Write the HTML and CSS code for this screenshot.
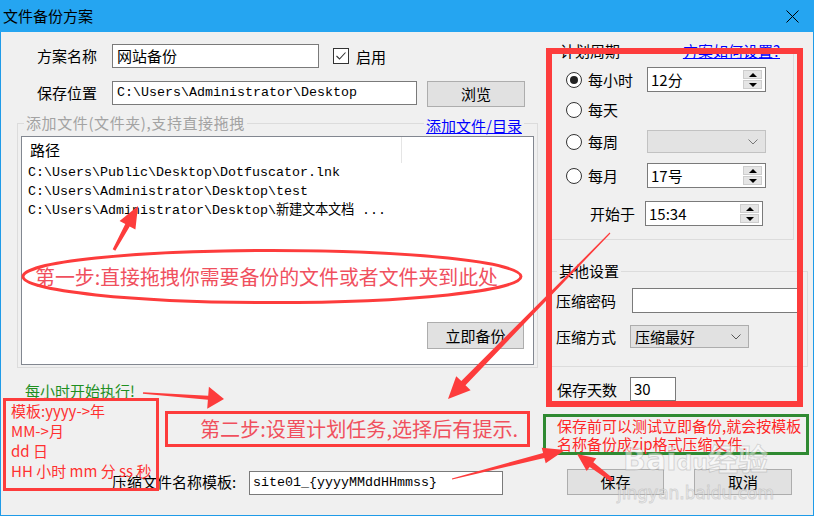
FILE: index.html
```html
<!DOCTYPE html>
<html lang="zh-CN">
<head>
  <meta charset="UTF-8">
  <meta name="viewport" content="width=device-width, initial-scale=1.0">
  <title>文件备份方案</title>
  <link rel="stylesheet" href="styles.css">
</head>
<body>
<div class="window">
  <div class="titlebar">
    <span class="title">文件备份方案</span>
    <svg class="close" width="13" height="13" viewBox="0 0 13 13"><path d="M0.5 0.5L12.5 12.5M12.5 0.5L0.5 12.5" stroke="#000" stroke-width="1" fill="none"/></svg>
  </div>

  <div class="main">
    <div class="left">
      <div class="row row-name">
        <span class="lbl">方案名称</span>
        <div class="field name-field">网站备份</div>
        <span class="check"><svg width="14" height="14" viewBox="0 0 14 14"><path d="M2.5 7L5.5 10L11.5 3.5" stroke="#333" stroke-width="1.1" fill="none"/></svg></span>
        <span class="check-text">启用</span>
      </div>
      <div class="row row-path">
        <span class="lbl">保存位置</span>
        <div class="field mono path-field">C:\Users\Administrator\Desktop</div>
        <button class="btn browse">浏览</button>
      </div>

      <fieldset class="group files">
        <legend class="legend-bar">
          <span class="lg-text muted files-title">添加文件(文件夹),支持直接拖拽</span>
          <span class="lg-line"></span>
          <a class="link add-link" href="#">添加文件/目录</a>
        </legend>
        <div class="files-body">
          <div class="listbox">
            <div class="list-head"><span class="head-col">路径</span></div>
            <div class="list-rows mono">
              <div>C:\Users\Public\Desktop\Dotfuscator.lnk</div>
              <div>C:\Users\Administrator\Desktop\test</div>
              <div>C:\Users\Administrator\Desktop\新建文本文档 ...</div>
            </div>
            <button class="btn backup">立即备份</button>
          </div>
        </div>
      </fieldset>
    </div>

    <div class="right">
      <fieldset class="group plan">
        <legend class="legend-bar plan-legend">
          <span class="lg-text">计划周期</span>
          <span class="lg-line"></span>
          <a class="link help-link" href="#">方案如何设置?</a>
        </legend>
        <div class="plan-body">
          <div class="opt-row">
            <span class="radio on"></span><span class="opt-text">每小时</span>
            <div class="spin"><span>12分</span><span class="spin-btns"><span class="sb up"></span><span class="sb down"></span></span></div>
          </div>
          <div class="opt-row r2">
            <span class="radio"></span><span class="opt-text">每天</span>
          </div>
          <div class="opt-row r3">
            <span class="radio"></span><span class="opt-text">每周</span>
            <div class="combo disabled"><span></span><svg width="10" height="6" viewBox="0 0 10 6"><path d="M0.5 0.5L5 5L9.5 0.5" stroke="#777" fill="none"/></svg></div>
          </div>
          <div class="opt-row r4">
            <span class="radio"></span><span class="opt-text">每月</span>
            <div class="spin"><span>17号</span><span class="spin-btns"><span class="sb up"></span><span class="sb down"></span></span></div>
          </div>
          <div class="opt-row r5">
            <span class="start-lbl">开始于</span>
            <div class="spin spin-time"><span>15:34</span><span class="spin-btns"><span class="sb up"></span><span class="sb down"></span></span></div>
          </div>
        </div>
      </fieldset>

      <fieldset class="group other">
        <legend class="plain-legend">其他设置</legend>
        <div class="other-body">
          <div class="row">
            <span class="pw-lbl">压缩密码</span>
            <div class="field pw-field"></div>
          </div>
          <div class="row mode-row">
            <span class="mode-lbl">压缩方式</span>
            <div class="combo mode-combo"><span>压缩最好</span><svg width="10" height="6" viewBox="0 0 10 6"><path d="M0.5 0.5L5 5L9.5 0.5" stroke="#555" fill="none"/></svg></div>
          </div>
        </div>
      </fieldset>

      <div class="row days">
        <span class="days-lbl">保存天数</span>
        <div class="field days-field">30</div>
      </div>
    </div>
  </div>

  <div class="bottom">
    <span class="tpl-lbl">压缩文件名称模板:</span>
    <div class="field mono tpl-field">site01_{yyyyMMddHHmmss}</div>
    <button class="btn save">保存</button>
    <button class="btn cancel">取消</button>
  </div>

  <!-- annotations drawn over the dialog -->
  <div class="note step1">第一步:直接拖拽你需要备份的文件或者文件夹到此处</div>
  <div class="red-frame"></div>
  <div class="note hour-tip">每小时开始执行!</div>
  <div class="tpl-box">
    <div>模板:yyyy-&gt;年</div>
    <div>MM-&gt;月</div>
    <div>dd 日</div>
    <div>HH 小时 mm 分 ss 秒</div>
  </div>
  <div class="step2"><span class="note-text">第二步:设置计划任务,选择后有提示.</span></div>
  <div class="tip-box">保存前可以测试立即备份,就会按模板<br>名称备份成zip格式压缩文件.</div>

  <div class="watermark">
    <span class="wm-logo">Bai<span class="wm-paw">du</span>经验</span>
    <span class="wm-url">jingyan.baidu.com</span>
  </div>

  <svg class="marks" width="814" height="516" viewBox="0 0 814 516">
    <ellipse cx="272" cy="276.5" rx="249" ry="26" fill="none" stroke="#fd3c3c" stroke-width="3"/>
    <polygon points="112.7,249.3 115.3,250.7 129.7,226.5 135.4,229.6 138,206 119.6,221.0 125.3,224.1"/>
    <polygon points="143.1,392.2 142.9,393.8 207.9,399.8 207.2,408.8 224,399 208.9,386.8 208.2,395.8"/>
    <polygon points="609.6,232.6 610.4,233.4 465.5,385.3 470.6,390.2 448,399 456.2,376.2 461.3,381.1"/>
    <polygon points="451.9,478.4 452.1,479.6 544.3,457.9 545.7,463.2 565,450 541.7,447.8 543.1,453.1"/>
    <polygon points="610.8,481.6 613.2,478.4 593.3,462.3 596.3,458.3 577,454 586.7,471.1 589.7,467.1"/>
  </svg>
</div>
</body>
</html>
```

FILE: styles.css
```css
* {
  box-sizing: border-box;
}
html, body {
  margin: 0;
  padding: 0;
}
body {
  width: 814px;
  height: 516px;
  overflow: hidden;
  font-family: "Noto Sans CJK SC", sans-serif;
  font-size: 15px;
  color: #000;
  background: #f0f0f0;
}
.window {
  position: relative;
  width: 814px;
  height: 516px;
  background: #f0f0f0;
  box-shadow: inset 1px 0 #1f9be8, inset -1px 0 #1f9be8, inset 0 -1px #1f9be8;
}
.titlebar {
  height: 32px;
  background: #25a5f1;
  display: flex;
  align-items: center;
  justify-content: space-between;
  padding: 0 15px 0 3px;
}
.title {
  line-height: 20px;
}
.close {
  display: block;
}

/* layout */
.main {
  display: flex;
  height: 369px;
}
.left {
  width: 546px;
  padding-top: 11px;
}
.right {
  width: 268px;
  padding-top: 9px;
}
.row {
  display: flex;
  align-items: center;
}

/* basic controls */
.field {
  background: #fff;
  border: 1px solid #7a7a7a;
  line-height: 22px;
  padding-left: 4px;
  white-space: nowrap;
  overflow: hidden;
}
.mono {
  font-family: "Liberation Mono", monospace;
  font-size: 13.33px;
}
.btn {
  font-family: inherit;
  font-size: 15px;
  background: #e1e1e1;
  border: 1px solid #adadad;
  padding: 0;
  color: #000;
  line-height: 22px;
}
.link {
  color: #0000ff;
  text-decoration: underline;
  padding: 0 2px;
  white-space: nowrap;
}
.muted {
  color: #a3a3a3;
}
.check {
  width: 16px;
  height: 16px;
  margin-left: 14px;
  border: 1px solid #333;
  background: #fff;
}
.check svg {
  display: block;
}
.check-text {
  margin-left: 7px;
}

/* left column */
.lbl {
  width: 112px;
  padding-left: 37px;
  line-height: 24px;
}
.row-name {
  height: 24px;
  margin-top: 1px;
}
.name-field {
  width: 207px;
  height: 24px;
}
.row-path {
  margin-top: 13px;
  height: 26px;
  align-items: flex-start;
}
.path-field {
  width: 305px;
  height: 24px;
}
.browse {
  width: 98px;
  height: 26px;
  margin-left: 10px;
}

.group {
  margin: 0;
  padding: 0;
  border: 1px solid #dcdcdc;
  min-width: 0;
}
.group legend {
  padding: 0;
  line-height: 20px;
  height: 20px;
}
.legend-bar {
  display: flex;
  align-items: center;
}
.lg-text {
  padding: 0 2px;
  white-space: nowrap;
}
.files-title {
  letter-spacing: 0.6px;
}
.lg-line {
  flex: 1;
  height: 1px;
  background: #dcdcdc;
}
.files {
  margin: 6px 0 0 17px;
  width: 521px;
}
.files legend {
  margin-left: 6px;
  width: 500px;
}
.add-link {
  align-self: flex-end;
  line-height: 14px;
}
.files-body {
  padding: 3px 3px 2px;
}
.listbox {
  height: 229px;
  background: #fff;
  border: 1px solid #828790;
  display: flex;
  flex-direction: column;
}
.list-head {
  height: 26px;
  display: flex;
}
.head-col {
  width: 380px;
  padding-left: 8px;
  line-height: 26px;
  border-right: 1px solid #e5e5e5;
}
.list-rows {
  padding-left: 6px;
  line-height: 19px;
  white-space: nowrap;
}
.backup {
  margin-top: auto;
  align-self: flex-end;
  margin-right: 9px;
  margin-bottom: 15px;
  width: 97px;
  height: 27px;
}

/* right column */
.plan {
  margin-left: 2px;
  width: 246px;
}
.plan legend {
  margin-left: 9px;
  width: 224px;
}
.plan-body {
  padding: 6px 0 13px 17px;
}
.opt-row {
  display: flex;
  align-items: center;
  height: 25px;
}
.r2 { margin-top: 5px; }
.r3 { margin-top: 7px; }
.r4 { margin-top: 9px; }
.r5 { margin-top: 13px; padding-left: 24px; }
.radio {
  flex: none;
  width: 16px;
  height: 16px;
  border-radius: 50%;
  border: 1px solid #333;
  background: #fff;
  display: flex;
  align-items: center;
  justify-content: center;
}
.radio.on::after {
  content: "";
  width: 8px;
  height: 8px;
  border-radius: 50%;
  background: #222;
}
.opt-text {
  width: 59px;
  margin-left: 6px;
  line-height: 20px;
}
.start-lbl {
  width: 55px;
  line-height: 20px;
}
.spin {
  width: 119px;
  height: 25px;
  background: #fff;
  border: 1px solid #7a7a7a;
  display: flex;
  align-items: center;
  justify-content: space-between;
  padding-left: 3px;
  line-height: 20px;
}
.spin-time {
  width: 118px;
}
.spin-btns {
  display: flex;
  flex-direction: column;
  gap: 1px;
  margin-right: 3px;
}
.sb {
  width: 19px;
  height: 9px;
  background: #e5e5e5;
  border: 1px solid #cdcdcd;
  display: flex;
  align-items: center;
  justify-content: center;
}
.sb::after {
  content: "";
  border-left: 4px solid transparent;
  border-right: 4px solid transparent;
}
.sb.up::after {
  border-bottom: 4px solid #000;
}
.sb.down::after {
  border-top: 4px solid #000;
}
.combo {
  width: 119px;
  height: 23px;
  background: #e1e1e1;
  border: 1px solid #adadad;
  display: flex;
  align-items: center;
  justify-content: space-between;
  padding: 0 7px 0 4px;
  line-height: 20px;
}
.combo svg {
  display: block;
}
.combo.disabled {
  background: #e3e3e3;
  border-color: #c2c2c2;
}

.other {
  margin: 21px 0 0 2px;
  width: 260px;
}
.plain-legend {
  margin-left: 8px;
}
.group .plain-legend {
  padding: 0 2px;
}
.other-body {
  padding: 7px 0 18px 7px;
}
.pw-lbl {
  width: 76px;
}
.pw-field {
  width: 170px;
  height: 25px;
}
.mode-row {
  margin-top: 12px;
}
.mode-lbl {
  width: 74px;
}
.days {
  margin: 10px 0 0 11px;
}
.days-lbl {
  width: 73px;
}
.days-field {
  width: 46px;
  height: 24px;
  padding-left: 3px;
}

/* bottom row */
.bottom {
  display: flex;
  align-items: flex-start;
  margin-top: 68px;
  padding-left: 112px;
  height: 26px;
}
.tpl-lbl {
  width: 137px;
  line-height: 22px;
  margin-top: 2px;
  white-space: nowrap;
}
.tpl-field {
  width: 254px;
  height: 24px;
  margin-top: 2px;
  padding-left: 3px;
}
.save {
  width: 97px;
  height: 26px;
  margin-left: 64px;
}
.cancel {
  width: 98px;
  height: 26px;
  margin-left: 30px;
}

/* annotations */
.note {
  position: absolute;
  white-space: nowrap;
}
.step1 {
  left: 35px;
  top: 264px;
  font-size: 19.9px;
  line-height: 26px;
  color: #f0505e;
}
.red-frame {
  position: absolute;
  left: 546px;
  top: 48px;
  width: 257px;
  height: 359px;
  border: 6px solid #fd3c3c;
}
.hour-tip {
  left: 25px;
  top: 381px;
  line-height: 20px;
  color: #1f8f1f;
}
.tpl-box {
  position: absolute;
  left: 3px;
  top: 398px;
  width: 156px;
  height: 93px;
  border: 3px solid #fd3c3c;
  padding-left: 5px;
  line-height: 20px;
  color: #ff3030;
  white-space: nowrap;
}
.step2 {
  position: absolute;
  left: 165px;
  top: 411px;
  width: 365px;
  height: 36px;
  border: 3px solid #fd3c3c;
  padding-left: 32px;
  font-size: 20.1px;
  line-height: 30px;
  color: #f0505e;
  white-space: nowrap;
}
.tip-box {
  position: absolute;
  left: 543px;
  top: 414px;
  width: 266px;
  height: 41px;
  border: 3px solid #2f8a32;
  padding-left: 11px;
  line-height: 18px;
  color: #ff2626;
  white-space: nowrap;
}
.watermark {
  position: absolute;
  left: 618px;
  top: 440px;
  width: 155px;
  display: flex;
  flex-direction: column;
  align-items: center;
  font-family: "DejaVu Sans", "Noto Sans CJK SC", sans-serif;
  color: rgba(255, 255, 255, 0.5);
  -webkit-text-stroke: 1px rgba(150, 150, 150, 0.35);
  pointer-events: none;
}
.wm-logo {
  font-size: 30px;
  font-weight: bold;
  line-height: 40px;
  white-space: nowrap;
}
.wm-paw {
  font-size: 22px;
}
.wm-url {
  font-size: 17px;
  line-height: 20px;
  white-space: nowrap;
}
.marks {
  position: absolute;
  left: 0;
  top: 0;
  pointer-events: none;
  fill: #fd3c3c;
}
```
